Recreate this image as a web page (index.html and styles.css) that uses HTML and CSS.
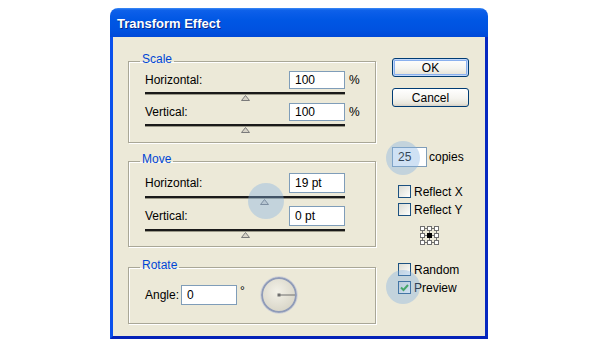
FILE: index.html
```html
<!DOCTYPE html>
<html>
<head>
<meta charset="utf-8">
<link rel="stylesheet" href="styles.css">
</head>
<body>
<div class="dialog">
  <div class="titlebar">Transform Effect</div>
  <div class="content">
    <div class="left">
      <fieldset class="group scale">
        <legend>Scale</legend>
        <div class="row h18"><span class="label">Horizontal:</span><input class="field" value="100"><span class="unit">%</span></div>
        <div class="slider"><div class="track"></div><svg class="thumb" style="margin-left:96px" width="9" height="6" viewBox="0 0 9 6"><polygon points="4.5,0.5 8.5,5.5 0.5,5.5" fill="#D8D4C8" stroke="#7A7A7A"/></svg></div>
        <div class="row h18"><span class="label">Vertical:</span><input class="field" value="100"><span class="unit">%</span></div>
        <div class="slider"><div class="track"></div><svg class="thumb" style="margin-left:96px" width="9" height="6" viewBox="0 0 9 6"><polygon points="4.5,0.5 8.5,5.5 0.5,5.5" fill="#D8D4C8" stroke="#7A7A7A"/></svg></div>
      </fieldset>
      <fieldset class="group move">
        <legend>Move</legend>
        <div class="row h20"><span class="label">Horizontal:</span><input class="field" value="19 pt"></div>
        <div class="slider s13"><div class="track"></div><svg class="thumb" style="margin-left:115px" width="9" height="6" viewBox="0 0 9 6"><polygon points="4.5,0.5 8.5,5.5 0.5,5.5" fill="#D8D4C8" stroke="#7A7A7A"/></svg></div>
        <div class="row h20"><span class="label">Vertical:</span><input class="field" value="0 pt"></div>
        <div class="slider s13"><div class="track"></div><svg class="thumb" style="margin-left:96px" width="9" height="6" viewBox="0 0 9 6"><polygon points="4.5,0.5 8.5,5.5 0.5,5.5" fill="#D8D4C8" stroke="#7A7A7A"/></svg></div>
        <span class="halo halo-move"></span>
      </fieldset>
      <fieldset class="group rotate">
        <legend>Rotate</legend>
        <div class="rot-row">
          <span class="angle-label">Angle:</span>
          <input class="field h20f" value="0">
          <span class="deg">°</span>
          <svg class="dial" width="38" height="38" viewBox="0 0 38 38">
            <defs>
              <radialGradient id="dg" cx="45%" cy="40%" r="65%">
                <stop offset="0" stop-color="#F3F1E8"/>
                <stop offset="1" stop-color="#D6D3C5"/>
              </radialGradient>
            </defs>
            <circle cx="19" cy="19" r="17" fill="url(#dg)" stroke="#8F9BB8" stroke-width="2"/>
            <circle cx="19" cy="19" r="18.3" fill="none" stroke="#C9CDD8" stroke-width="0.8"/>
            <line x1="19" y1="19" x2="35" y2="19" stroke="#6E6E6E" stroke-width="1"/>
            <rect x="17.5" y="17.5" width="3" height="3" fill="#6E6E6E"/>
          </svg>
        </div>
      </fieldset>
    </div>
    <div class="right">
      <button class="btn default">OK</button>
      <button class="btn cancel">Cancel</button>
      <div class="copies">
        <input class="field copies-field" value="25"><span class="copies-label">copies</span>
        <span class="halo halo-copies"></span>
      </div>
      <label class="check first"><span class="box"></span>Reflect X</label>
      <label class="check"><span class="box"></span>Reflect Y</label>
      <svg class="refpoint" width="19" height="19" viewBox="0 0 19 19">
        <g stroke="#6F6F6F" stroke-width="1">
          <line x1="2.5" y1="2.5" x2="16.5" y2="2.5"/>
          <line x1="2.5" y1="9.5" x2="16.5" y2="9.5"/>
          <line x1="2.5" y1="16.5" x2="16.5" y2="16.5"/>
          <line x1="2.5" y1="2.5" x2="2.5" y2="16.5"/>
          <line x1="9.5" y1="2.5" x2="9.5" y2="16.5"/>
          <line x1="16.5" y1="2.5" x2="16.5" y2="16.5"/>
        </g>
        <g fill="#FFFFFF" stroke="#6F6F6F" stroke-width="1">
          <rect x="0.5" y="0.5" width="4" height="4"/>
          <rect x="7.5" y="0.5" width="4" height="4"/>
          <rect x="14.5" y="0.5" width="4" height="4"/>
          <rect x="0.5" y="7.5" width="4" height="4"/>
          <rect x="14.5" y="7.5" width="4" height="4"/>
          <rect x="0.5" y="14.5" width="4" height="4"/>
          <rect x="7.5" y="14.5" width="4" height="4"/>
          <rect x="14.5" y="14.5" width="4" height="4"/>
        </g>
        <rect x="7" y="7" width="5" height="5" fill="#000000"/>
      </svg>
      <label class="check random"><span class="box"></span>Random</label>
      <label class="check preview"><span class="box checked"><svg width="11" height="11" viewBox="0 0 11 11"><polyline points="2,5.5 4.5,8 9,3" fill="none" stroke="#21A121" stroke-width="2"/></svg></span>Preview<span class="halo halo-preview"></span></label>
    </div>
  </div>
</div>
</body>
</html>
```
FILE: styles.css
```css
html, body {
  margin: 0;
  padding: 0;
  background: #FFFFFF;
}
body {
  font-family: "Liberation Sans", Arial, sans-serif;
  font-size: 12px;
  color: #000000;
}
.dialog {
  margin: 8px 0 0 110px;
  width: 378px;
}
.titlebar {
  height: 29px;
  box-sizing: border-box;
  padding: 8px 0 0 7px;
  border-radius: 8px 8px 0 0;
  background: linear-gradient(#3D8CF6 0px, #0F62EA 2px, #0A5DE8 5px, #0057E4 12px, #0052E0 22px, #0049D8 29px);
  color: #FFFFFF;
  font-weight: bold;
  font-size: 13px;
  line-height: 16px;
  text-shadow: 1px 1px 0 #0A2A8A;
}
.content {
  position: relative;
  display: flex;
  height: 302px;
  box-sizing: border-box;
  padding: 17px 0 0 15px;
  background: #ECE9D8;
  border-left: 3px solid #0A50EC;
  border-right: 3px solid #0628C0;
  border-bottom: 3px solid #0422B8;
}
.left {
  width: 248px;
  display: flex;
  flex-direction: column;
}
.group {
  position: relative;
  margin: 0;
  min-width: 0;
  border: 1px solid #A9A797;
  box-shadow: inset 1px 1px 0 #FFFFFF, 1px 1px 0 #FFFFFF;
  border-radius: 0;
}
.group legend {
  margin-left: -5px;
  padding: 0 2px 3px;
  color: #0046D5;
  line-height: 11px;
  font-size: 12px;
}
.scale {
  padding: 3px 0 7px 16px;
}
.move {
  margin-top: 11px;
  padding: 5px 0 7px 16px;
}
.rotate {
  margin-top: 13px;
  padding: 2px 0 9px 16px;
}
.row {
  display: flex;
  align-items: center;
}
.h18 { height: 18px; }
.h20 { height: 20px; }
.label {
  width: 144px;
}
.field {
  box-sizing: border-box;
  width: 56px;
  height: 100%;
  border: 1px solid #7F9DB9;
  background: #FFFFFF;
  padding: 0 5px;
  margin: 0;
  font-family: "Liberation Sans", Arial, sans-serif;
  font-size: 12px;
  color: #000000;
  outline: none;
}
.unit {
  margin-left: 4px;
}
.slider {
  width: 200px;
  height: 14px;
  box-sizing: border-box;
  padding-top: 3px;
}
.slider.s13 {
  height: 13px;
}
.track {
  height: 2px;
  background: #1A1A1A;
  border-bottom: 1px solid #9A9888;
}
.thumb {
  display: block;
  margin-top: 0;
}
.rot-row {
  display: flex;
  align-items: center;
  height: 38px;
}
.angle-label {
  width: 36px;
}
.h20f {
  height: 20px;
}
.deg {
  margin-left: 3px;
  align-self: flex-start;
  margin-top: 8px;
}
.dial {
  margin-left: 15px;
  display: block;
}
.right {
  position: relative;
  margin-left: 16px;
  display: flex;
  flex-direction: column;
  align-items: flex-start;
}
.btn {
  width: 77px;
  height: 19px;
  box-sizing: border-box;
  padding: 0;
  border: 1px solid #003C74;
  border-radius: 3px;
  background: linear-gradient(#FFFFFF 0%, #F5F4EF 55%, #E8E6DC 85%, #D6D0C5 100%);
  font-family: "Liberation Sans", Arial, sans-serif;
  font-size: 12px;
  color: #000000;
}
.default {
  margin-top: 4px;
  box-shadow: inset 0 0 0 1px #C2D8FA, inset 0 0 0 2px #8AB0EE;
}
.cancel {
  margin-top: 11px;
}
.copies {
  position: relative;
  margin-top: 40px;
  display: flex;
  align-items: center;
  height: 20px;
}
.copies-field {
  width: 35px;
}
.copies-label {
  margin-left: 2px;
}
.check {
  position: relative;
  display: flex;
  align-items: center;
  height: 13px;
  margin-left: 6px;
  margin-top: 5px;
}
.check.first {
  margin-top: 18px;
}
.check.random {
  margin-top: 18px;
}
.box {
  box-sizing: border-box;
  width: 13px;
  height: 13px;
  margin-right: 3px;
  border: 1px solid #1C5180;
  background: linear-gradient(135deg, #DCDCD4 0%, #F4F4F0 70%, #FFFFFF 100%);
  display: flex;
  align-items: center;
  justify-content: center;
}
.refpoint {
  display: block;
  margin: 10px 0 0 28px;
}
.halo {
  position: absolute;
  border-radius: 50%;
  background: rgba(130, 175, 225, 0.38);
  pointer-events: none;
}
.halo-move {
  width: 36px;
  height: 36px;
  left: 119px;
  top: 15px;
}
.halo-copies {
  width: 34px;
  height: 34px;
  left: -6px;
  top: -6px;
}
.halo-preview {
  width: 34px;
  height: 34px;
  left: -12px;
  top: -11px;
}
```
